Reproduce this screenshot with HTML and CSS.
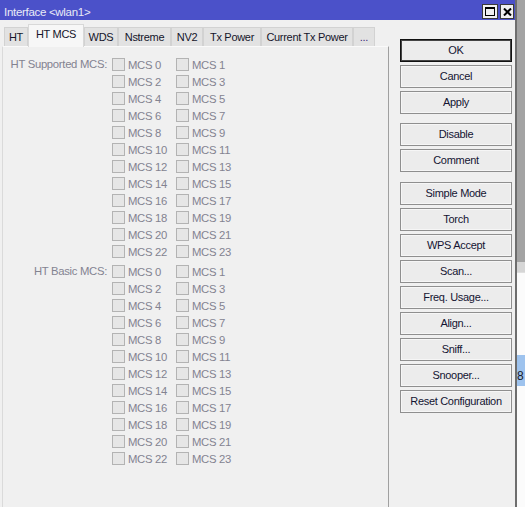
FILE: index.html
```html
<!DOCTYPE html>
<html>
<head>
<meta charset="utf-8">
<link rel="stylesheet" href="styles.css">
</head>
<body>
<div class="screen">
  <div class="window">
    <div class="titlebar">
      <span class="title">Interface &lt;wlan1&gt;</span>
      <div class="tbtns">
        <span class="tbtn tmax"><svg width="10" height="9" viewBox="0 0 10 9"><rect x="0.5" y="0.5" width="9" height="8" fill="none" stroke="#000"/><rect x="0" y="0" width="10" height="2" fill="#000"/></svg></span>
        <span class="tbtn tclose"><svg width="9" height="8" viewBox="0 0 9 8"><path d="M1 0.5 L8 7.5 M8 0.5 L1 7.5" stroke="#000" stroke-width="2"/></svg></span>
      </div>
    </div>
    <div class="body">
      <div class="left">
        <div class="tabs">
          <div class="tab w1">HT</div>
          <div class="tab sel w2">HT MCS</div>
          <div class="tab w3">WDS</div>
          <div class="tab w4">Nstreme</div>
          <div class="tab w5">NV2</div>
          <div class="tab w6">Tx Power</div>
          <div class="tab w7">Current Tx Power</div>
          <div class="tab w8">...</div>
        </div>
        <div class="panel">
          <div class="group">
            <div class="glabel">HT Supported MCS:</div>
            <div class="cbgrid">
              <div class="cb"><span class="box"></span>MCS 0</div><div class="cb"><span class="box"></span>MCS 1</div>
              <div class="cb"><span class="box"></span>MCS 2</div><div class="cb"><span class="box"></span>MCS 3</div>
              <div class="cb"><span class="box"></span>MCS 4</div><div class="cb"><span class="box"></span>MCS 5</div>
              <div class="cb"><span class="box"></span>MCS 6</div><div class="cb"><span class="box"></span>MCS 7</div>
              <div class="cb"><span class="box"></span>MCS 8</div><div class="cb"><span class="box"></span>MCS 9</div>
              <div class="cb"><span class="box"></span>MCS 10</div><div class="cb"><span class="box"></span>MCS 11</div>
              <div class="cb"><span class="box"></span>MCS 12</div><div class="cb"><span class="box"></span>MCS 13</div>
              <div class="cb"><span class="box"></span>MCS 14</div><div class="cb"><span class="box"></span>MCS 15</div>
              <div class="cb"><span class="box"></span>MCS 16</div><div class="cb"><span class="box"></span>MCS 17</div>
              <div class="cb"><span class="box"></span>MCS 18</div><div class="cb"><span class="box"></span>MCS 19</div>
              <div class="cb"><span class="box"></span>MCS 20</div><div class="cb"><span class="box"></span>MCS 21</div>
              <div class="cb"><span class="box"></span>MCS 22</div><div class="cb"><span class="box"></span>MCS 23</div>
            </div>
          </div>
          <div class="group g2">
            <div class="glabel">HT Basic MCS:</div>
            <div class="cbgrid">
              <div class="cb"><span class="box"></span>MCS 0</div><div class="cb"><span class="box"></span>MCS 1</div>
              <div class="cb"><span class="box"></span>MCS 2</div><div class="cb"><span class="box"></span>MCS 3</div>
              <div class="cb"><span class="box"></span>MCS 4</div><div class="cb"><span class="box"></span>MCS 5</div>
              <div class="cb"><span class="box"></span>MCS 6</div><div class="cb"><span class="box"></span>MCS 7</div>
              <div class="cb"><span class="box"></span>MCS 8</div><div class="cb"><span class="box"></span>MCS 9</div>
              <div class="cb"><span class="box"></span>MCS 10</div><div class="cb"><span class="box"></span>MCS 11</div>
              <div class="cb"><span class="box"></span>MCS 12</div><div class="cb"><span class="box"></span>MCS 13</div>
              <div class="cb"><span class="box"></span>MCS 14</div><div class="cb"><span class="box"></span>MCS 15</div>
              <div class="cb"><span class="box"></span>MCS 16</div><div class="cb"><span class="box"></span>MCS 17</div>
              <div class="cb"><span class="box"></span>MCS 18</div><div class="cb"><span class="box"></span>MCS 19</div>
              <div class="cb"><span class="box"></span>MCS 20</div><div class="cb"><span class="box"></span>MCS 21</div>
              <div class="cb"><span class="box"></span>MCS 22</div><div class="cb"><span class="box"></span>MCS 23</div>
            </div>
          </div>
        </div>
      </div>
      <div class="buttons">
        <div class="btn default">OK</div>
        <div class="btn">Cancel</div>
        <div class="btn">Apply</div>
        <div class="btn sep1">Disable</div>
        <div class="btn">Comment</div>
        <div class="btn sep2">Simple Mode</div>
        <div class="btn">Torch</div>
        <div class="btn">WPS Accept</div>
        <div class="btn">Scan...</div>
        <div class="btn">Freq. Usage...</div>
        <div class="btn">Align...</div>
        <div class="btn">Sniff...</div>
        <div class="btn">Snooper...</div>
        <div class="btn">Reset Configuration</div>
      </div>
    </div>
  </div>
  <div class="strip">
    <div class="s1"></div>
    <div class="s2"></div>
    <div class="s3"></div>
    <div class="s4">8</div>
    <div class="s5"></div>
  </div>
</div>
</body>
</html>
```

FILE: styles.css
```css
html, body {
  margin: 0;
  padding: 0;
  background: #f0f0f0;
}
body {
  font-family: "Liberation Sans", Arial, sans-serif;
  font-size: 11px;
  letter-spacing: -0.3px;
}
.screen {
  display: flex;
  width: 525px;
  height: 507px;
  overflow: hidden;
}
.window {
  width: 515px;
  height: 507px;
  border-right: 2px solid #6e6e6e;
  background: #f0f0f0;
  display: flex;
  flex-direction: column;
  flex: none;
}
.titlebar {
  height: 20px;
  background: #4b51c9;
  display: flex;
  align-items: flex-start;
  justify-content: space-between;
  flex: none;
}
.title {
  color: #e9eaf6;
  padding-left: 4px;
  padding-top: 6px;
  line-height: 13px;
  font-size: 11.5px;
  letter-spacing: -0.3px;
}
.tbtns {
  display: flex;
  gap: 2px;
  padding-top: 4px;
  padding-right: 1px;
}
.tbtn {
  height: 13px;
  border: 1px solid #3a3a3a;
  background: #f0f0f0;
  display: flex;
  align-items: center;
  justify-content: center;
}
.tmax { width: 14px; }
.tclose { width: 12px; }
.body {
  display: flex;
  flex: 1;
  min-height: 0;
}
.left {
  width: 387px;
  padding-left: 2px;
  display: flex;
  flex-direction: column;
  flex: none;
}
.tabs {
  display: flex;
  align-items: flex-end;
  height: 22px;
  margin-top: 4px;
  padding-left: 2px;
  position: relative;
  z-index: 1;
}
.tab {
  box-sizing: border-box;
  height: 19px;
  border: 1px solid #d2d2d2;
  border-bottom: none;
  background: #e2e2e2;
  color: #15152a;
  text-align: center;
  line-height: 19px;
}
.tab.sel {
  height: 23px;
  margin-bottom: -1px;
  background: #f7f7f7;
  border-color: #d8d8d8;
  line-height: 19px;
}
.w1 { width: 24px; }
.w2 { width: 56px; }
.w3 { width: 34px; }
.w4 { width: 53px; }
.w5 { width: 32px; }
.w6 { width: 58px; }
.w7 { width: 92px; }
.w8 { width: 22px; color: #3a2a7a; }
.panel {
  flex: 1;
  border-top: 1px solid #fafafa;
  border-left: 1px solid #dadada;
  border-right: 1px solid #a0a0a0;
  background: #f0f0f0;
  padding-top: 9px;
}
.group {
  display: flex;
  align-items: flex-start;
}
.g2 { margin-top: 3px; }
.glabel {
  width: 104px;
  text-align: right;
  color: #838390;
  height: 17px;
  line-height: 16px;
  font-size: 11.3px;
}
.cbgrid {
  margin-left: 5px;
  display: grid;
  grid-template-columns: 64px 64px;
  grid-auto-rows: 17px;
}
.cb {
  display: flex;
  align-items: center;
  color: #838390;
  line-height: 16px;
  font-size: 11.3px;
}
.box {
  box-sizing: border-box;
  width: 13px;
  height: 13px;
  border: 1px solid #b3b3b3;
  background: #e6e6e6;
  margin-right: 3px;
  flex: none;
}
.buttons {
  margin-left: 11px;
  width: 112px;
  padding-top: 19px;
  display: flex;
  flex-direction: column;
  gap: 3px;
}
.btn {
  box-sizing: border-box;
  height: 23px;
  border: 1px solid #8f8f8f;
  box-shadow: inset 0 0 0 1px #f6f6f6;
  background: #ececec;
  color: #141432;
  text-align: center;
  line-height: 21px;
}
.btn.default {
  border: 1px solid #111;
  box-shadow: inset 0 0 0 1px #444;
}
.sep1 { margin-top: 6px; }
.sep2 { margin-top: 7px; }
.strip {
  width: 8px;
  flex: none;
  display: flex;
  flex-direction: column;
}
.s1 { height: 262px; background: #a3a3a3; }
.s2 { height: 10px; background: #d6d6d6; }
.s3 { height: 83px; background: #fbfbfb; border-top: 1px solid #e0e0e0; box-sizing: border-box; }
.s4 {
  height: 31px;
  background: #9ec3ee;
  color: #1a1a2a;
  font-size: 12px;
  line-height: 12px;
  padding-top: 15px;
  box-sizing: border-box;
}
.s5 { flex: 1; background: #fbfbfb; }
```
